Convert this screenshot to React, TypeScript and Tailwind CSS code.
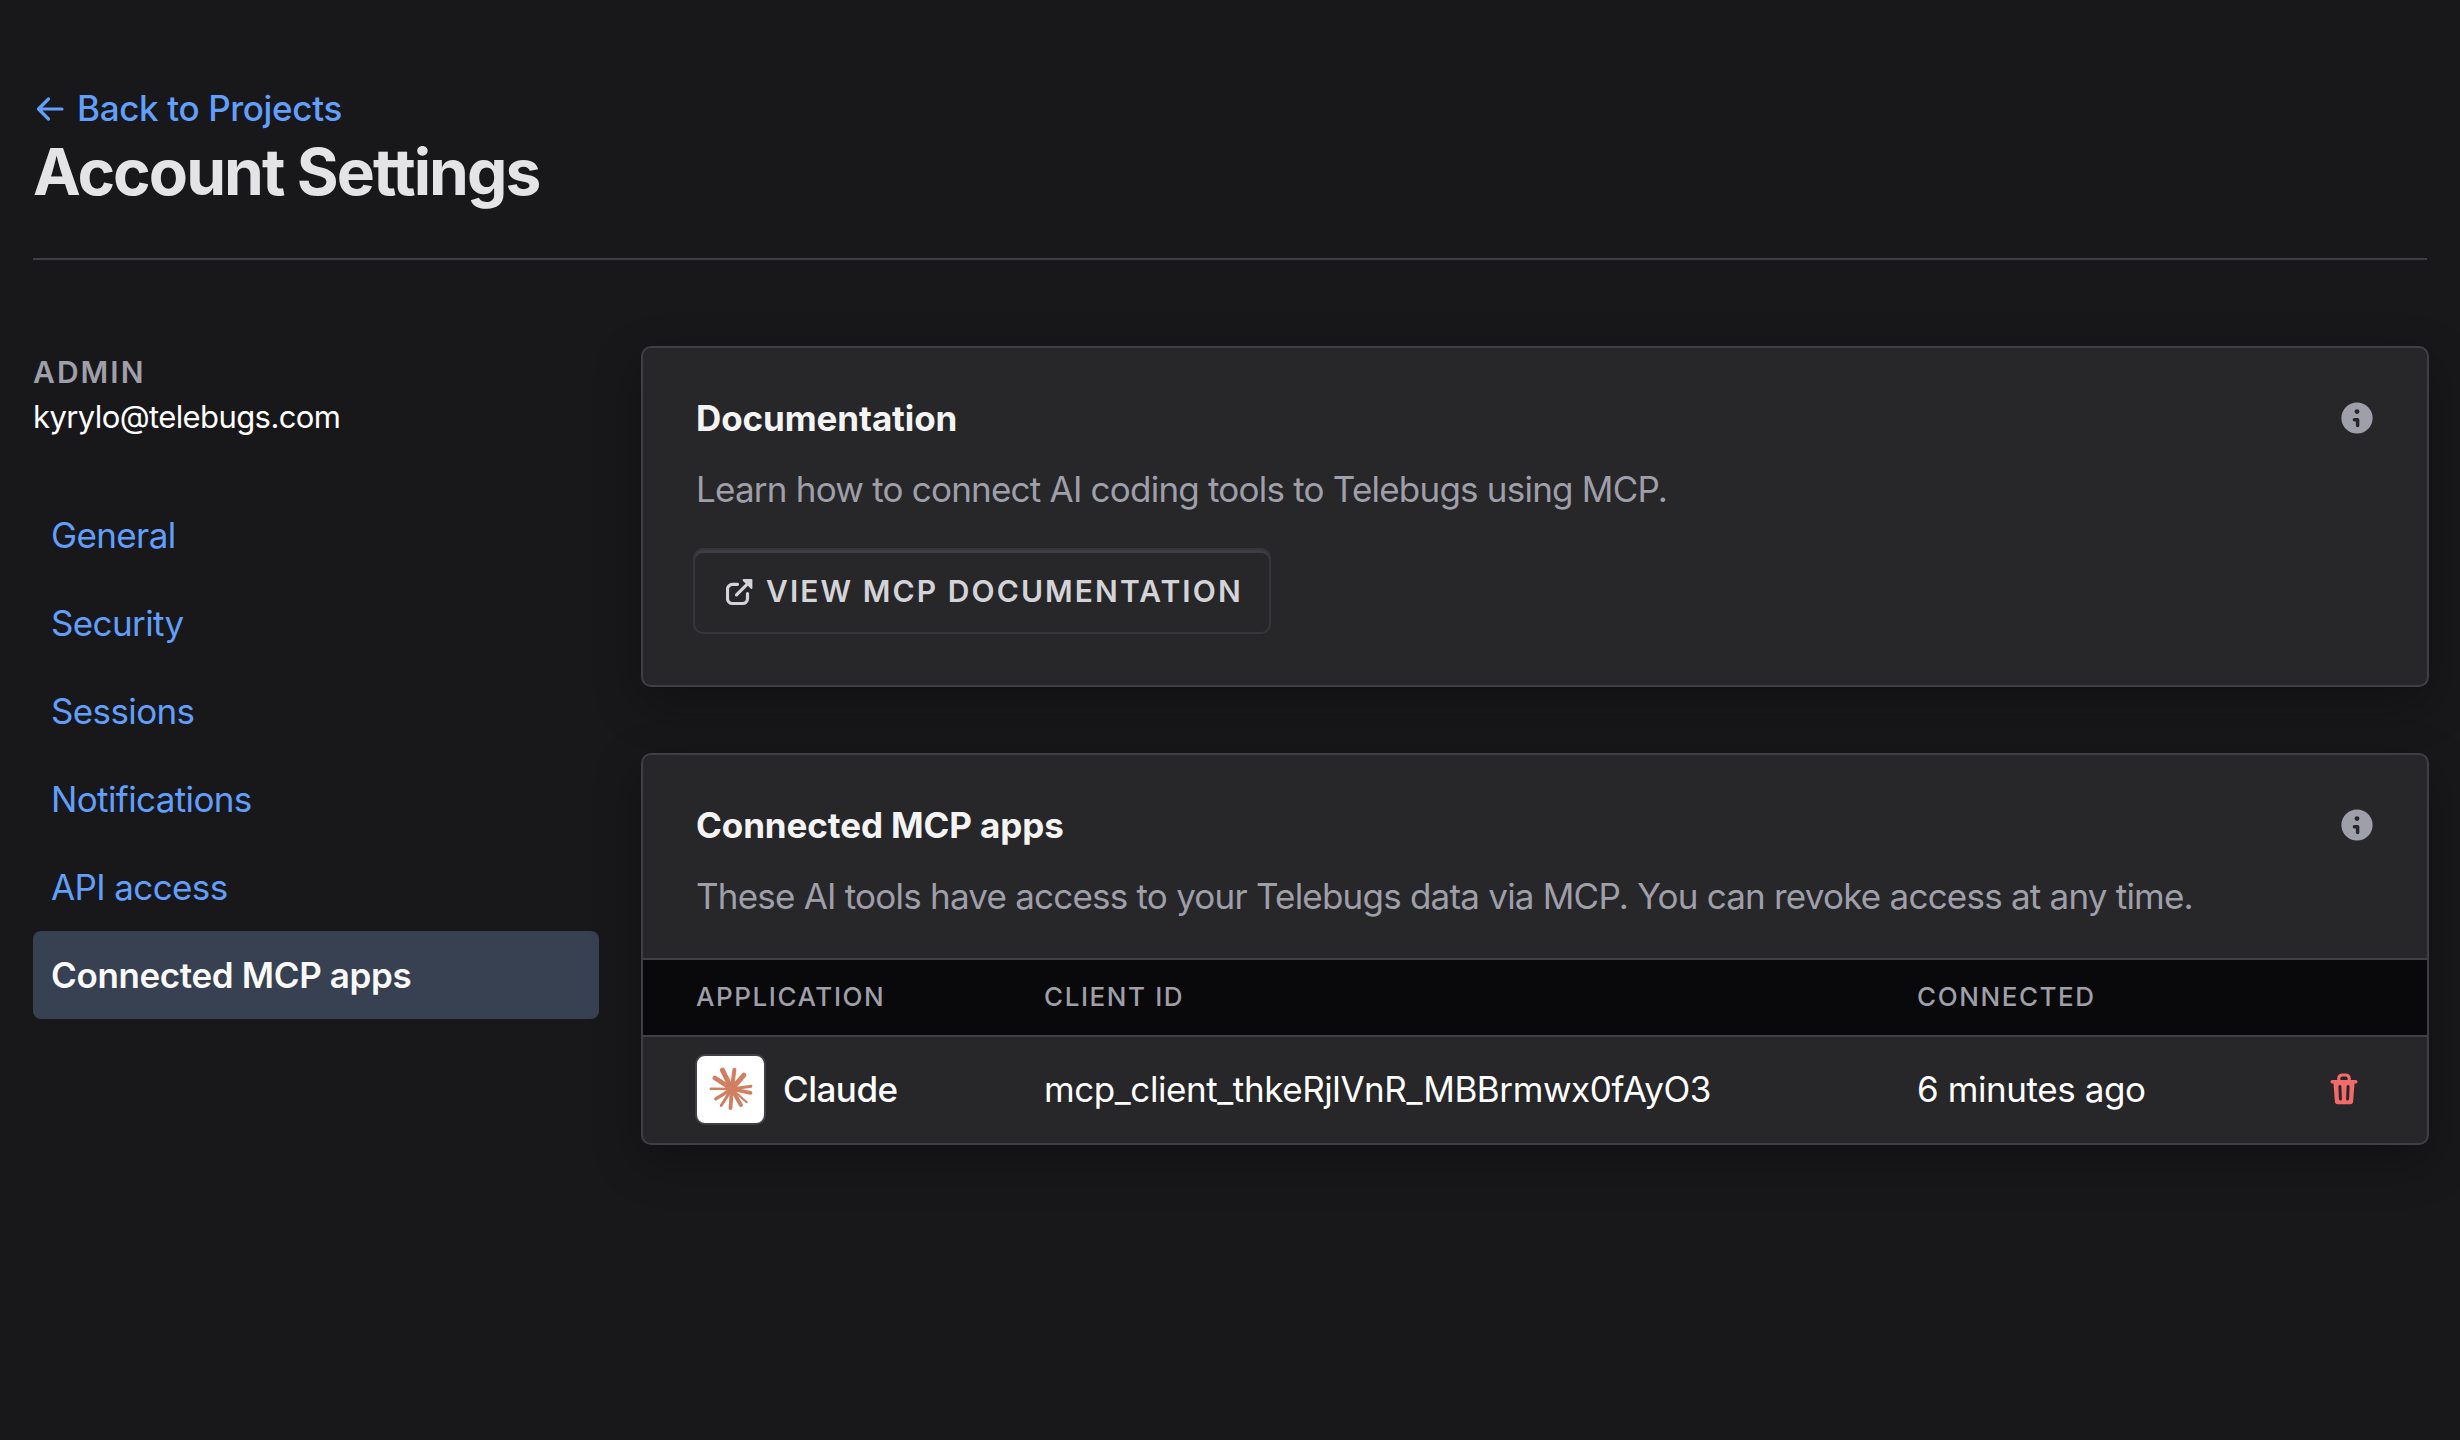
import type { ReactNode } from "react";
import clsx from "clsx";

const NAV_ITEMS = [
  { label: "General" },
  { label: "Security" },
  { label: "Sessions" },
  { label: "Notifications" },
  { label: "API access" },
  { label: "Connected MCP apps", active: true },
];

const APPS = [
  {
    name: "Claude",
    clientId: "mcp_client_thkeRjlVnR_MBBrmwx0fAyO3",
    connected: "6 minutes ago",
  },
];

// [x, y, stroke width] of each ray's tip, all rays start in the middle
const RAYS = [
  [25.4, 14.2, 5],
  [37.4, 13.8, 4],
  [46.9, 19.2, 5],
  [53.9, 30.2, 3],
  [53.5, 36.8, 3.8],
  [49.7, 46.2, 2.2],
  [43.9, 49, 4],
  [33.5, 52.2, 3.8],
  [24.2, 49.5, 3],
  [18.8, 42.9, 3.4],
  [13.8, 32.8, 2.4],
  [17.8, 21.9, 4.6],
];

function ArrowLeftIcon() {
  return (
    <svg width="28" height="26" viewBox="0 0 28 26" fill="none" stroke="currentColor" strokeWidth="3.2" strokeLinecap="round" strokeLinejoin="round">
      <path d="M26 13H3M12.5 3 2.5 13l10 10" />
    </svg>
  );
}

function ExternalLinkIcon() {
  return (
    <svg width="28" height="28" viewBox="0 0 28 28" fill="none" stroke="currentColor" strokeWidth="3.2" strokeLinecap="round" strokeLinejoin="round">
      <path d="M11.5 6.3H6.5a5 5 0 0 0-5 5v9.2a5 5 0 0 0 5 5h10a5 5 0 0 0 5-5v-5" />
      <path d="M10.5 16.8 23.5 3.8" />
      <path d="M17.5 2h8v8Z" fill="currentColor" strokeWidth="1.8" />
    </svg>
  );
}

function InfoIcon() {
  return (
    <svg width="32" height="32" viewBox="0 0 32 32" fill="none">
      <circle cx="16" cy="16" r="15.6" fill="#9f9fa9" />
      <circle cx="16" cy="9.6" r="2.4" fill="#27272a" />
      <path d="M13.4 17.8h3.2v5.8" stroke="#27272a" strokeWidth="3.5" strokeLinecap="round" strokeLinejoin="round" />
    </svg>
  );
}

function TrashIcon() {
  return (
    <svg width="28" height="32" viewBox="0 0 28 32" fill="none" stroke="currentColor" strokeLinecap="round" strokeLinejoin="round">
      <path d="M8.8 8V5.4a3.4 3.4 0 0 1 3.4-3.4h3.6a3.4 3.4 0 0 1 3.4 3.4V8" strokeWidth="3.2" />
      <path d="M2.2 8.8h23.6" strokeWidth="3.4" />
      <path d="M3.4 9.5 4.9 28.6A2.8 2.8 0 0 0 7.7 31.2h12.6a2.8 2.8 0 0 0 2.8-2.6l1.5-19.1Z" fill="currentColor" stroke="none" />
      <path d="m9.9 13.4.5 12.6M18.1 13.4 17.6 26" stroke="#27272a" strokeWidth="3" />
    </svg>
  );
}

function ClaudeLogo() {
  return (
    <svg width="67" height="67" viewBox="0 0 67 67" stroke="#d07f60" strokeLinecap="round">
      {RAYS.map(([x, y, width]) => (
        <line key={`${x}-${y}`} x1="34.8" y1="33" x2={x} y2={y} strokeWidth={width} />
      ))}
      <circle cx="34.8" cy="33" r="5" fill="#d07f60" stroke="none" />
    </svg>
  );
}

function Card({ title, description, children }: { title: string; description: string; children: ReactNode }) {
  return (
    <section className="overflow-hidden rounded-[10px] border-2 border-[#3f3f46] bg-[#27272a] shadow-[0_16px_48px_rgba(0,0,0,0.3)]">
      <header className="pt-[43px] pr-[54px] pl-[53px]">
        <div className="flex h-[54px] items-center justify-between">
          <h2 className="text-[35px] leading-[54px] font-bold tracking-[-0.1px] text-[#f4f4f5]">{title}</h2>
          <InfoIcon />
        </div>
        <p className="mt-[17px] text-[35px] leading-[54px] tracking-[-0.78px] text-[#9f9fa9]">{description}</p>
      </header>
      {children}
    </section>
  );
}

export default function App() {
  return (
    <div className="min-h-screen bg-[#18181b] pt-[81px] pr-[33px] pl-[33px] font-['Inter',sans-serif] text-white">
      <header className="h-[179px] border-b-2 border-[#3f3f46]">
        <a href="#" className="flex h-[55px] items-center gap-[13px] pl-[3px] text-[35px] font-medium tracking-[-0.35px] text-[#619ffb]">
          <ArrowLeftIcon />
          Back to Projects
        </a>
        <h1 className="text-[64px] leading-[72px] font-bold tracking-[-1.93px] text-[#e4e4e7]">Account Settings</h1>
      </header>

      <div className="flex items-start gap-[42px]">
        <aside className="w-[566px] shrink-0 pt-[90px]">
          <div className="text-[30px] leading-[45px] font-semibold tracking-[2.05px] text-[#9f9fa9]">ADMIN</div>
          <div className="text-[31px] leading-[44px] tracking-[-0.6px]">kyrylo@telebugs.com</div>
          <nav className="mt-[52px] flex flex-col">
            {NAV_ITEMS.map(({ label, active }) => (
              <a
                key={label}
                href="#"
                className={clsx(
                  "flex h-[88px] items-center rounded-lg pl-[18px] text-[35px]",
                  active
                    ? "bg-[#384151] font-semibold tracking-[-0.36px] text-[#fafafa]"
                    : "tracking-[-0.62px] text-[#619ffb]",
                )}
              >
                {label}
              </a>
            ))}
          </nav>
        </aside>

        <main className="-mr-[2px] flex flex-1 flex-col gap-[66px] pt-[86px]">
          <Card title="Documentation" description="Learn how to connect AI coding tools to Telebugs using MCP.">
            <div className="pt-[32px] pb-[51px] pl-[50px]">
              <button className="flex h-[86px] w-[578px] items-center gap-[12px] rounded-[10px] border-2 border-[#37373b] pt-px pl-[31px] text-[30px] font-semibold tracking-[2.08px] whitespace-nowrap text-[#d4d4d8] shadow-[inset_0_3px_0_#3d3d43]">
                <ExternalLinkIcon />
                VIEW MCP DOCUMENTATION
              </button>
            </div>
          </Card>

          <Card
            title="Connected MCP apps"
            description="These AI tools have access to your Telebugs data via MCP. You can revoke access at any time."
          >
            <div className="mt-[35px] grid h-[79px] grid-cols-[348px_873px_1fr] items-center border-y-2 border-[#3f3f46] bg-[#09090b] pb-[2px] pl-[53px] text-[26px] font-medium tracking-[1.58px] text-[#9f9fa9]">
              <div>APPLICATION</div>
              <div>CLIENT ID</div>
              <div>CONNECTED</div>
            </div>
            {APPS.map((app) => (
              <div
                key={app.clientId}
                className="grid h-[106px] grid-cols-[349px_873px_1fr] items-center pb-[2px] pl-[52px] text-[35px] tracking-[-0.42px]"
              >
                <div className="flex items-center gap-[17px] font-medium tracking-[-0.5px]">
                  <div className="size-[71px] rounded-[10px] border-2 border-[#3f3f46] bg-white">
                    <ClaudeLogo />
                  </div>
                  {app.name}
                </div>
                <div>{app.clientId}</div>
                <div className="flex items-center justify-between pr-[69px]">
                  {app.connected}
                  <button className="text-[#f26b6b]" aria-label="Revoke access">
                    <TrashIcon />
                  </button>
                </div>
              </div>
            ))}
          </Card>
        </main>
      </div>
    </div>
  );
}
